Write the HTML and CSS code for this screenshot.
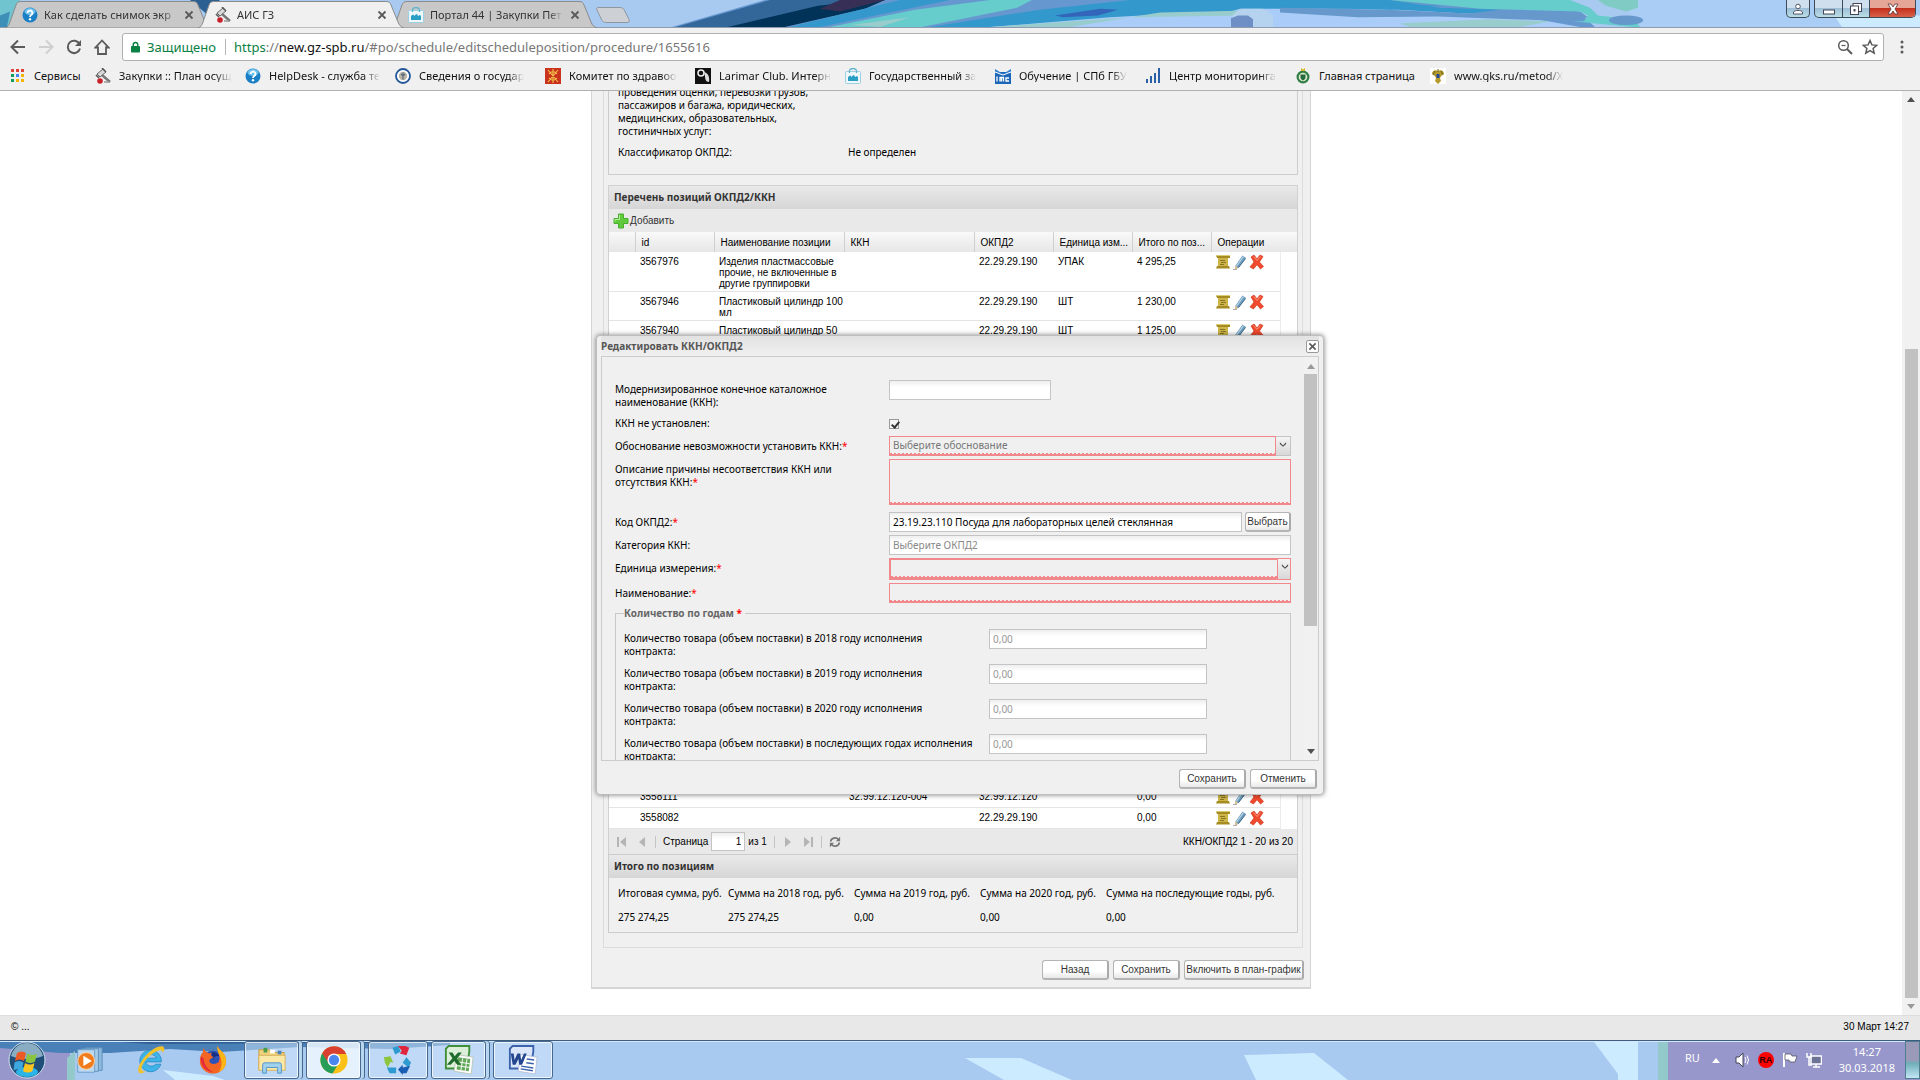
FILE: index.html
```html
<!DOCTYPE html>
<html lang="ru">
<head>
  <meta charset="UTF-8">
  <meta name="viewport" content="width=device-width, initial-scale=1.0">
  <title>АИС ГЗ</title>
  <link rel="stylesheet" href="styles.css">
</head>
<body>

<!-- Общие иконки -->
<svg class="defs" aria-hidden="true">
  <symbol id="i-x" viewBox="0 0 10 10"><path d="M1.5 1.5l7 7M8.5 1.5l-7 7" fill="none" stroke="#5a5a5a" stroke-width="1.8"/></symbol>
  <symbol id="i-gavel" viewBox="0 0 16 16">
    <path d="M2 6l6-5 3 3-6 5z" fill="#d8d8d8" stroke="#666" stroke-width="1"/>
    <path d="M1 7l3 3M7 0l4 4" stroke="#555" stroke-width="1.6"/>
    <path d="M7 7l8 7" stroke="#777" stroke-width="2.4"/>
    <circle cx="5" cy="13" r="2.8" fill="#c8202a"/><path d="M9 14h5" stroke="#999" stroke-width="1.5"/>
  </symbol>
  <symbol id="i-help" viewBox="0 0 16 16">
    <circle cx="8" cy="8" r="7.5" fill="#1a7fc4"/><ellipse cx="8" cy="4.5" rx="5.5" ry="3.5" fill="#6cc0ee"/>
    <path d="M5.6 6a2.4 2.4 0 1 1 3.6 2c-.9.6-1.2.9-1.2 2" fill="none" stroke="#fff" stroke-width="1.8"/><circle cx="8" cy="12.3" r="1.2" fill="#fff"/>
  </symbol>
  <symbol id="i-portal" viewBox="0 0 16 16">
    <rect x=".5" y="3.500" width="15" height="12" rx="1" fill="#eef8fb" stroke="#9ccfe0"/>
    <path d="M4.500 5V3a3.500 2.500 0 0 1 7 0v2" fill="none" stroke="#5fb4cc" stroke-width="1.3"/>
    <path d="M3 13V9l2-1.500L7 9V8l2-1 1 2 2-1 1 1v4z" fill="#2a9fc4"/>
  </symbol>
  <symbol id="i-scroll" viewBox="0 0 16 16">
    <path d="M3 3h10v10H3z" fill="#cdb548"/>
    <path d="M1 1.500h14v2.500H2zM2 12h12l1 2.500H1z" fill="#a58c22"/>
    <path d="M1.500 1.500h13" stroke="#e0cc70" stroke-width="1"/>
    <path d="M5 6.500h5M6 8.500h5M5 10.500h4" stroke="#8a7620" stroke-width="1"/>
  </symbol>
  <symbol id="i-pencil" viewBox="0 0 16 16">
    <path d="M10.500 1.500L14 4 6.500 14 3 15l.5-3.500z" fill="#6f9dbd"/>
    <path d="M11.500 2.500L4.500 12" stroke="#b9d8ea" stroke-width="1.2"/>
    <path d="M13.500 4.500L6.500 13.500" stroke="#3f6a8c" stroke-width="1"/>
    <path d="M3.600 11.500L2.500 15.500 6 14z" fill="#dfc38a"/><path d="M1 15.500h4" stroke="#999" stroke-width=".8"/>
  </symbol>
  <symbol id="i-delete" viewBox="0 0 16 16">
    <path d="M2 3l3-2 3 4L11 1l3 1.500L10.500 8 14.500 12.500 11.500 15 8 10.800 4.500 15 1 13l4-5z" fill="#ef4a2d" stroke="#c92c14" stroke-width=".6"/>
    <path d="M4.500 2.500L8 6.500l3.500-4" fill="none" stroke="#ff9277" stroke-width="1"/>
  </symbol>
  <symbol id="i-down" viewBox="0 0 15 18"><path d="M4 6l3.500 3.500L11 6v2l-3.500 3L4 8z" fill="#444"/></symbol>
  <symbol id="i-tri-up" viewBox="0 0 8 5"><path d="M0 5l4-5 4 5z" fill="currentColor"/></symbol>
  <symbol id="i-tri-down" viewBox="0 0 8 5"><path d="M0 0l4 5 4-5z" fill="currentColor"/></symbol>
  <symbol id="i-tab" viewBox="0 0 206 27">
    <path d="M0 27C3 26 4 24 5 21L11 4C12 1.500 13 .5 16 .5H188c3 0 4 1 5 3.500L200 21c1 3 3 5 6 6z" fill="currentColor" stroke="#8b8b8b"/>
  </symbol>
</svg>

<header class="browser">
  <div class="tabs">
    <svg class="wallpaper" viewBox="0 0 1920 28" preserveAspectRatio="none" aria-hidden="true">
      <rect width="1920" height="28" fill="#a8c9f0"/>
      <path d="M0 0h20L8 28H0z" fill="#6fc4d0"/><path d="M0 16l10-4-3 16H0z" fill="#3e8fb8"/>
      <path d="M190 0h30l-14 14z" fill="#2c5f92"/>
      <path d="M672 28L765 0h800l30 28z" fill="#6698cf"/>
      <path d="M676 28L770 0h115l-120 28z" fill="#336699"/>
      <path d="M728 28l90-22 55-6h12l-20 9-80 19z" fill="#013358"/>
      <path d="M820 9l20-9h45l-45 12z" fill="#372f55"/>
      <path d="M790 28L900 0h50l-130 28z" fill="#3498cc"/>
      <path d="M830 28l85-18L990 0h42l-15 8-95 20z" fill="#66cccc"/>
      <path d="M850 26l60-8-30 10z" fill="#99cccc"/>
      <path d="M930 28l110-18 90-10h260l50 8 60 2-40 5-190-6-150 9-80 10z" fill="#3398cc"/>
      <path d="M1055 16l45-7 18 1-20 6-35 2z" fill="#3366bb"/>
      <path d="M990 28l120-10 50-3h60l20-6h140l140 8 60 11z" fill="#a9cdf8"/>
      <path d="M990 28l140-10-60 10zM1130 18l110-2 10-5-90 2z" fill="#99cccc"/>
      <path d="M1230 28l3-13 8-6h22l10 6v13z" fill="#b5d2ee"/>
      <path d="M1231 28v-9l7-3h10l5 4v8z" fill="#6d8fc5"/>
      <path d="M1280 8l110 2 80 4 110-2 8 6-20 4-130-5-80 1-78-5z" fill="#6698cc"/>
      <path d="M1280 2h50l110 4-50 4-110-3z" fill="#3398cc"/>
      <path d="M1390 0h180l20 8 8 8 70 8 4 4h-40l-60-6h12l4-6-8-4-100-3z" fill="#66cccc"/>
      <path d="M1400 24l90-4 60 2-30 6h-110z" fill="#99cccc"/>
      <path d="M1580 0h40l20 28h280V0z" fill="#a9cdf5"/>
      <path d="M1598 0h40v8l-12 4-20-6z" fill="#80ccc4"/><ellipse cx="1626" cy="21" rx="17" ry="5" fill="#6698cc"/>
      <path d="M1834 16h86v12h-78z" fill="#cdebff"/>
    </svg>
    <div class="tab">
      <svg class="tab-shape"><use href="#i-tab"/></svg>
      <svg class="ico"><use href="#i-help"/></svg>
      <span class="tab-title">Как сделать снимок экр</span>
      <button class="tab-close" aria-label="Закрыть вкладку"><svg><use href="#i-x"/></svg></button>
    </div>
    <div class="tab active">
      <svg class="tab-shape"><use href="#i-tab"/></svg>
      <svg class="ico"><use href="#i-gavel"/></svg>
      <span class="tab-title">АИС ГЗ</span>
      <button class="tab-close" aria-label="Закрыть вкладку"><svg><use href="#i-x"/></svg></button>
    </div>
    <div class="tab">
      <svg class="tab-shape"><use href="#i-tab"/></svg>
      <svg class="ico"><use href="#i-portal"/></svg>
      <span class="tab-title">Портал 44 | Закупки Пет</span>
      <button class="tab-close" aria-label="Закрыть вкладку"><svg><use href="#i-x"/></svg></button>
    </div>
    <button class="new-tab" aria-label="Новая вкладка">
      <svg viewBox="0 0 34 16"><path d="M2 .5h22c2 0 3 1 4 2l5 10c1 2 0 3-2 3H10c-2 0-3-1-4-2L1 3C0 1 1 .5 2 .5z" fill="#cdd0d4" stroke="#8f979f"/></svg>
    </button>
    <div class="win-buttons">
      <button class="win-user" aria-label="Профиль"><svg viewBox="0 0 12 12"><circle cx="6" cy="3.500" r="2.300" fill="#fff" stroke="#556"/><path d="M1.500 11V9c1-2 8-2 9 0v2z" fill="#fff" stroke="#556"/></svg></button>
      <div class="win-group">
        <button aria-label="Свернуть"><svg viewBox="0 0 12 12"><rect x=".5" y="7" width="11" height="4" fill="#fff" stroke="#445"/></svg></button>
        <button aria-label="Восстановить"><svg viewBox="0 0 12 12"><rect x="3" y=".5" width="8.500" height="8" fill="#fff" stroke="#445"/><rect x=".5" y="3" width="8" height="8.500" fill="#fff" stroke="#445"/><rect x="3.500" y="6" width="2" height="2.500" fill="#445"/></svg></button>
        <button class="win-close" aria-label="Закрыть"><svg viewBox="0 0 12 12"><path d="M1 1h3l2 3 2-3h3L8 6l3 5H8L6 8l-2 3H1l3-5z" fill="#fff" stroke="#533" stroke-width=".8"/></svg></button>
      </div>
    </div>
  </div>

  <div class="toolbar">
    <button aria-label="Назад"><svg viewBox="0 0 16 16"><path d="M15 8H2M8 1.500L1.500 8 8 14.500" fill="none" stroke="#5a5a5a" stroke-width="2"/></svg></button>
    <button aria-label="Вперёд"><svg viewBox="0 0 16 16"><path d="M1 8h13M8 1.500L14.500 8 8 14.500" fill="none" stroke="#cfcfcf" stroke-width="2"/></svg></button>
    <button aria-label="Обновить"><svg viewBox="0 0 16 16"><path d="M13.500 5A6.200 6.200 0 1 0 14 9.500" fill="none" stroke="#5a5a5a" stroke-width="2"/><path d="M15 1v6H9z" fill="#5a5a5a"/></svg></button>
    <button aria-label="Домой"><svg viewBox="0 0 16 16"><path d="M8 1.500L1.500 8.500H4V15h8V8.500h2.500z" fill="none" stroke="#5a5a5a" stroke-width="1.8"/></svg></button>
    <div class="omnibox">
      <svg class="lock" viewBox="0 0 10 12"><rect y="5" width="10" height="7" rx="1" fill="#0b8043"/><path d="M2.500 6V3.500a2.500 2.500 0 0 1 5 0V6" fill="none" stroke="#0b8043" stroke-width="1.6"/></svg>
      <span class="secure">Защищено</span>
      <span class="url"><span class="green">https</span>://<b>new.gz-spb.ru</b>/#po/schedule/editscheduleposition/procedure/1655616</span>
      <button aria-label="Масштаб"><svg viewBox="0 0 16 16"><circle cx="6.500" cy="6.500" r="4.800" fill="none" stroke="#5a5a5a" stroke-width="1.500"/><path d="M10 10l5 5" stroke="#5a5a5a" stroke-width="2"/><path d="M4.500 6.500h4" stroke="#5a5a5a" stroke-width="1.200"/></svg></button>
      <button aria-label="В закладки"><svg viewBox="0 0 16 16"><path d="M8 1.500l1.900 4.400 4.800.4-3.600 3.200 1.100 4.700L8 11.700l-4.200 2.500 1.100-4.700L1.300 6.300l4.800-.4z" fill="none" stroke="#5a5a5a" stroke-width="1.500"/></svg></button>
    </div>
    <button class="menu" aria-label="Меню"><svg viewBox="0 0 16 16"><circle cx="8" cy="3" r="1.500" fill="#5a5a5a"/><circle cx="8" cy="8" r="1.500" fill="#5a5a5a"/><circle cx="8" cy="13" r="1.500" fill="#5a5a5a"/></svg></button>
  </div>

  <nav class="bookmarks">
    <a class="apps" href="#"><svg viewBox="0 0 13 13"><path d="M0 0h3v3H0zM5 0h3v3H5zM10 0h3v3h-3z" fill="#db4437"/><path d="M0 5h3v3H0z" fill="#0f9d58"/><path d="M5 5h3v3H5z" fill="#4285f4"/><path d="M10 5h3v3h-3z" fill="#f4b400"/><path d="M0 10h3v3H0z" fill="#0f9d58"/><path d="M5 10h3v3H5zM10 10h3v3h-3z" fill="#f4b400"/></svg><span>Сервисы</span></a>
    <a href="#"><svg class="ico"><use href="#i-gavel"/></svg><span>Закупки :: План осущ</span></a>
    <a href="#"><svg class="ico"><use href="#i-help"/></svg><span>HelpDesk - служба те</span></a>
    <a href="#"><svg class="ico" viewBox="0 0 16 16"><circle cx="8" cy="8" r="7" fill="#fff" stroke="#24569a" stroke-width="1.800"/><circle cx="8" cy="8" r="4.200" fill="#b9b4a4"/><path d="M8 4.500v7M6 6l2 2 2-2" stroke="#5b6a80" stroke-width="1.200" fill="none"/></svg><span>Сведения о государ</span></a>
    <a href="#"><svg class="ico" viewBox="0 0 16 16"><rect width="16" height="16" fill="#c9321c"/><path d="M3 2l10 12M13 2L3 14M8 1v14M4 6c2-3 6-3 8 0M4 10c2 3 6 3 8 0" fill="none" stroke="#f2c14b" stroke-width="1.100"/></svg><span>Комитет по здравоо</span></a>
    <a href="#"><svg class="ico" viewBox="0 0 16 16"><rect width="16" height="16" fill="#111"/><circle cx="6" cy="5" r="3" fill="none" stroke="#eee" stroke-width="1.500"/><path d="M9 4c4 1 6 5 5 10-3 0-4-3-4-6z" fill="#ddd"/></svg><span>Larimar Club. Интерн</span></a>
    <a href="#"><svg class="ico"><use href="#i-portal"/></svg><span>Государственный за</span></a>
    <a href="#"><svg class="ico" viewBox="0 0 16 16"><rect y="4" width="16" height="12" fill="#1c66b8"/><path d="M0 1l8 5 8-5v4H0z" fill="#2f7fd0"/><path d="M0 4l8 3 8-3" fill="none" stroke="#fff"/><path d="M2 8.500v5M5 13.500v-4h1.500v4M6.500 9.500H8.500v4M14 10h-3v3h3" fill="none" stroke="#fff" stroke-width="1.300"/></svg><span>Обучение | СПб ГБУ</span></a>
    <a href="#"><svg class="ico" viewBox="0 0 16 16"><path d="M1 11h2v4H1zM5 8h2v7H5zM9 5h2v10H9zM13 0h2v15h-2z" fill="#2b5fa8"/></svg><span>Центр мониторинга</span></a>
    <a class="short" href="#"><svg class="ico" viewBox="0 0 16 16"><circle cx="8" cy="9" r="6.500" fill="#2f7f45"/><circle cx="8" cy="9" r="4.300" fill="#dfe9d0"/><path d="M5.500 6.500h5v3c0 2-2.500 3-2.500 3s-2.500-1-2.500-3z" fill="#276b3a"/><path d="M6 0l2 1.500L10 0v3H6z" fill="#d8b62c"/></svg><span>Главная страница</span></a>
    <a href="#"><svg class="ico" viewBox="0 0 16 16"><rect width="16" height="16" fill="#fff"/><path d="M8 3C5 1 2 3 2 6c2 1 3 2 4 4l-1 3 3 3 3-3-1-3c1-2 2-3 4-4 0-3-3-5-6-3z" fill="#b39a2c"/><rect x="6.500" y="6" width="3" height="4" fill="#25469b"/><path d="M5 3l-2 4M11 3l2 4M8 1v3" stroke="#6d5f1c"/></svg><span>www.gks.ru/metod/X</span></a>
  </nav>
</header>

<main class="viewport">
  <div class="page">
    <section class="panel">
      <div class="panel-body">
        <div class="box classifier">
          <p>проведения оценки, перевозки грузов, пассажиров и багажа, юридических, медицинских, образовательных, гостиничных услуг:</p>
          <dl>
            <dt>Классификатор ОКПД2:</dt>
            <dd>Не определен</dd>
          </dl>
        </div>

        <div class="grid">
          <h2>Перечень позиций ОКПД2/ККН</h2>
          <div class="grid-toolbar">
            <button><svg class="ico" viewBox="0 0 16 16"><path d="M5.500 1h5v4.500H15v5h-4.500V15h-5v-4.500H1v-5h4.500z" fill="#5fcb3c" stroke="#4aaf2e"/><path d="M6.500 2v4.500H2v2" fill="none" stroke="#b4f09a"/></svg>Добавить</button>
          </div>
          <table class="positions">
            <colgroup>
              <col class="c-num"><col class="c-id"><col class="c-wide"><col class="c-wide"><col class="c-id"><col class="c-id"><col class="c-id"><col class="c-ops"><col>
            </colgroup>
            <thead>
              <tr><th></th><th>id</th><th>Наименование позиции</th><th>ККН</th><th>ОКПД2</th><th>Единица изм...</th><th>Итого по поз...</th><th colspan="2">Операции</th></tr>
            </thead>
            <tbody>
              <tr><td></td><td>3567976</td><td>Изделия пластмассовые прочие, не включенные в другие группировки</td><td></td><td>22.29.29.190</td><td>УПАК</td><td>4 295,25</td><td class="ops"><svg><use href="#i-scroll"/></svg><svg><use href="#i-pencil"/></svg><svg><use href="#i-delete"/></svg></td><td class="rest"></td></tr>
              <tr><td></td><td>3567946</td><td>Пластиковый цилиндр 100 мл</td><td></td><td>22.29.29.190</td><td>ШТ</td><td>1 230,00</td><td class="ops"><svg><use href="#i-scroll"/></svg><svg><use href="#i-pencil"/></svg><svg><use href="#i-delete"/></svg></td><td class="rest"></td></tr>
              <tr><td></td><td>3567940</td><td>Пластиковый цилиндр 50</td><td></td><td>22.29.29.190</td><td>ШТ</td><td>1 125,00</td><td class="ops"><svg><use href="#i-scroll"/></svg><svg><use href="#i-pencil"/></svg><svg><use href="#i-delete"/></svg></td><td class="rest"></td></tr>
              <tr class="more"><td colspan="9"></td></tr>
              <tr><td></td><td>3558111</td><td></td><td>32.99.12.120-004</td><td>32.99.12.120</td><td></td><td>0,00</td><td class="ops"><svg><use href="#i-scroll"/></svg><svg><use href="#i-pencil"/></svg><svg><use href="#i-delete"/></svg></td><td class="rest"></td></tr>
              <tr><td></td><td>3558082</td><td></td><td></td><td>22.29.29.190</td><td></td><td>0,00</td><td class="ops"><svg><use href="#i-scroll"/></svg><svg><use href="#i-pencil"/></svg><svg><use href="#i-delete"/></svg></td><td class="rest"></td></tr>
            </tbody>
          </table>
          <div class="pager">
            <button aria-label="Первая"><svg viewBox="0 0 12 12"><path d="M1 1h2v10H1zM10 1v10L4 6z" fill="#b5b5b5"/></svg></button>
            <button aria-label="Предыдущая"><svg viewBox="0 0 12 12"><path d="M9 1v10L3 6z" fill="#b5b5b5"/></svg></button>
            <i></i>
            <label for="pageNum">Страница</label>
            <input type="text" id="pageNum" value="1">
            <span>из 1</span>
            <i></i>
            <button aria-label="Следующая"><svg viewBox="0 0 12 12"><path d="M3 1v10l6-5z" fill="#b5b5b5"/></svg></button>
            <button aria-label="Последняя"><svg viewBox="0 0 12 12"><path d="M9 1h2v10H9zM2 1v10l6-5z" fill="#b5b5b5"/></svg></button>
            <i></i>
            <button aria-label="Обновить"><svg viewBox="0 0 14 14"><path d="M2 6.500A5 4.500 0 0 1 11 4M12 7.500A5 4.500 0 0 1 3 10" fill="none" stroke="#777" stroke-width="2"/><path d="M13 1v5H8zM1 13V8h5z" fill="#777"/></svg></button>
            <span class="total">ККН/ОКПД2 1 - 20 из 20</span>
          </div>
        </div>

        <div class="box summary">
          <h2>Итого по позициям</h2>
          <table>
            <tr><th class="sum-total">Итоговая сумма, руб.</th><th class="sum-year">Сумма на 2018 год, руб.</th><th class="sum-year">Сумма на 2019 год, руб.</th><th class="sum-year">Сумма на 2020 год, руб.</th><th>Сумма на последующие годы, руб.</th></tr>
            <tr><td>275 274,25</td><td>275 274,25</td><td>0,00</td><td>0,00</td><td>0,00</td></tr>
          </table>
        </div>
      </div>
      <div class="buttons">
        <button class="btn">Назад</button>
        <button class="btn">Сохранить</button>
        <button class="btn wide">Включить в план-график</button>
      </div>
    </section>
  </div>
  <div class="scrollbar page-scroll"><svg><use href="#i-tri-up"/></svg><div></div><svg><use href="#i-tri-down"/></svg></div>

  <!-- Окно редактирования -->
  <div class="dialog" role="dialog" aria-labelledby="dialogTitle">
    <div class="dialog-head">
      <h2 id="dialogTitle">Редактировать ККН/ОКПД2</h2>
      <button aria-label="Закрыть"><svg><use href="#i-x"/></svg></button>
    </div>
    <div class="dialog-body">
      <form>
        <div class="row tall">
          <label for="kkn">Модернизированное конечное каталожное наименование (ККН):</label>
          <input class="short" type="text" id="kkn">
        </div>
        <div class="row">
          <label for="noKkn">ККН не установлен:</label>
          <input type="checkbox" id="noKkn" checked>
        </div>
        <div class="row">
          <label for="reason">Обоснование невозможности установить ККН:<em>*</em></label>
          <div class="combo">
            <select class="invalid" id="reason"><option>Выберите обоснование</option></select>
            <span class="trigger"><svg><use href="#i-down"/></svg></span>
          </div>
        </div>
        <div class="row area">
          <label for="descr">Описание причины несоответствия ККН или отсутствия ККН:<em>*</em></label>
          <textarea class="invalid" id="descr"></textarea>
        </div>
        <div class="row">
          <label for="okpd">Код ОКПД2:<em>*</em></label>
          <input type="text" id="okpd" value="23.19.23.110 Посуда для лабораторных целей стеклянная">
          <button type="button" class="btn pick">Выбрать</button>
        </div>
        <div class="row">
          <label for="category">Категория ККН:</label>
          <input type="text" id="category" placeholder="Выберите ОКПД2">
        </div>
        <div class="row">
          <label for="unit">Единица измерения:<em>*</em></label>
          <div class="combo focus">
            <select class="invalid" id="unit"><option></option></select>
            <span class="trigger"><svg><use href="#i-down"/></svg></span>
          </div>
        </div>
        <div class="row">
          <label for="name">Наименование:<em>*</em></label>
          <input class="invalid" type="text" id="name">
        </div>
        <fieldset>
          <legend>Количество по годам <em>*</em></legend>
          <div class="year"><label for="q1">Количество товара (объем поставки) в 2018 году исполнения<br>контракта:</label><input type="text" id="q1" value="0,00" disabled></div>
          <div class="year"><label for="q2">Количество товара (объем поставки) в 2019 году исполнения<br>контракта:</label><input type="text" id="q2" value="0,00" disabled></div>
          <div class="year"><label for="q3">Количество товара (объем поставки) в 2020 году исполнения<br>контракта:</label><input type="text" id="q3" value="0,00" disabled></div>
          <div class="year"><label for="q4">Количество товара (объем поставки) в последующих годах исполнения<br>контракта:</label><input type="text" id="q4" value="0,00" disabled></div>
        </fieldset>
      </form>
      <div class="scrollbar dialog-scroll"><svg><use href="#i-tri-up"/></svg><div></div><svg><use href="#i-tri-down"/></svg></div>
    </div>
    <div class="dialog-foot">
      <button class="btn">Сохранить</button>
      <button class="btn">Отменить</button>
    </div>
  </div>
</main>

<footer class="status"><span>© ...</span><span>30 Март 14:27</span></footer>

<!-- Панель задач -->
<div class="taskbar">
  <svg class="wallpaper" viewBox="0 0 1920 40" preserveAspectRatio="none" aria-hidden="true">
    <rect width="1920" height="40" fill="#a8c9f0"/>
    <path d="M0 0h70v40H0z" fill="#9797cb"/>
    <path d="M0 0h450v5l-60 4-90-2-80 5-50-3-60 4H60L0 8z" fill="#4a80b8"/>
    <path d="M90 0h340l-60 3-220 1z" fill="#2f5f94"/>
    <path d="M67 18l8-7v29h-8z" fill="#94c9cc"/>
    <path d="M163 30l50 6 12 4h-50z" fill="#cdebff"/>
    <path d="M965 18h56l51 22h-68z" fill="#cdebff"/>
    <path d="M1244 15l70-2 34 27h-92z" fill="#cdebff"/>
    <path d="M1594 2h44v38h-20v-6z" fill="#cdebff"/>
    <path d="M1658 0h20v40h-20z" fill="#94c9cc"/>
    <path d="M1668 0h252v40h-252z" fill="#9797cb"/>
    <path d="M0 .5h1920" stroke="#3c5c80"/><path d="M0 1.500h1920" stroke="#d6e8fb"/>
  </svg>
  <div class="tasks">
    <button class="start" aria-label="Пуск"><svg viewBox="0 0 38 38"><circle cx="19" cy="19" r="18" fill="#1f4f78" stroke="#d3e2ee" stroke-width="1"/><path d="M3 15C6 5 13 2 19 2s13 3 16 13c-9 4-23 4-32 0z" fill="#8badc4"/><ellipse cx="19" cy="31" rx="11" ry="5" fill="#2ab4e8"/><path d="M9 12c3-2 6-2 9 0l-2 8c-3-2-6-2-9 0z" fill="#ee5a24"/><path d="M19.500 12.500c3 2 6 2 9.500 0l-2 8c-3 2-6 2-9.500 0z" fill="#8bc540"/><path d="M6.500 21.500c3-2 6-2 9 0l-2 8c-2-2-5-2-8 0z" fill="#3ea7e0"/><path d="M17 22c3 2 6 2 9.500 0l-2 8c-3 2-6 2-9.500 0z" fill="#fbc41f"/></svg></button>
    <button class="pin" aria-label="Проигрыватель"><svg viewBox="0 0 32 32"><path d="M12 3h18v24H12z" fill="#8fb9dc" stroke="#5c8fbd"/><path d="M8 4h18v24H8z" fill="#a8cbe8" stroke="#5c8fbd"/><path d="M4 5h18v24H4z" fill="#bcd9f0" stroke="#6a9cc6"/><circle cx="13" cy="17" r="9" fill="#f07c1e" stroke="#fbd6ad"/><path d="M10 11.500l9 5.500-9 5.500z" fill="#fff"/></svg></button>
    <button class="pin" aria-label="Internet Explorer"><svg viewBox="0 0 32 32"><path d="M27 18H10.500c.5 4 7 6.500 10.500 2.500h5.500A11.500 11.500 0 1 1 27 18zM10.500 14h11c-1-5-10-5-11 0z" fill="#3fb4e8" stroke="#1b7fb8" stroke-width=".7"/><path d="M4 30C-1 27 6 14 16 6c7-5 13-6 14-3 .5 2-.5 4-1.500 6 0-3-1-5-7-2C12 12 5 22 6 26c.3 2 2 2 4 2-2 2-4 2.500-6 2z" fill="#f2c22c"/></svg></button>
    <button class="pin" aria-label="Firefox"><svg viewBox="0 0 32 32"><circle cx="16" cy="18" r="12" fill="#2a52b8"/><path d="M14 8c4-1 8 1 9 4-4-1-7 1-7 4z" fill="#1a2f80"/><path d="M21 1c1 5 9 7 9 16a14 13.500 0 0 1-28 0c0-5 2-8 3-9l1-5c1 3 3 5 6 6l3-1c-2 3-1 4 2 5-2 1-4 1-5 4 1 4 7 4 10 1 3-5-2-12-1-17z" fill="#f26522"/><path d="M21 1c1 5 9 7 9 16a14 13.500 0 0 1-8 12c4-6 4-12 1-18-2-4-3-7-2-10z" fill="#fbb615"/><path d="M3 12c-1 9 5 17 14 17-5-2-11-7-11-15z" fill="#e5293e"/></svg></button>
    <button class="task stacked" aria-label="Проводник"><svg viewBox="0 0 32 32"><path d="M2 5h11l2 3h14v18H2z" fill="#f0d27c" stroke="#c79d3e"/><path d="M7 3h4v5H7z" fill="#4a9b4a"/><path d="M14 5h5v4h-5z" fill="#fff"/><path d="M22 6h4v4h-4z" fill="#4a7fc0"/><path d="M2 11h28v16H2z" fill="#fbe8a6" stroke="#d6b25a"/><path d="M6 30v-9q0-2 2-2h16q2 0 2 2v9h-4v-6H10v6z" fill="#9fd0ee" stroke="#4f94c4"/></svg></button>
    <button class="task stacked current" aria-label="Chrome"><svg viewBox="0 0 32 32"><circle cx="16" cy="16" r="14.500" fill="#fbc116"/><path d="M16 16h-6.500L3.400 8.700a14.500 14.500 0 0 0 11 21.700L21.500 19z" fill="#279e57"/><path d="M3.400 8.700L10 19l6-3V9.500h13A14.500 14.500 0 0 0 3.400 8.700z" fill="#d9402f"/><circle cx="16" cy="16" r="7" fill="#fff"/><circle cx="16" cy="16" r="5.500" fill="#4a86ee"/></svg></button>
    <button class="task" aria-label="Утилита"><svg viewBox="0 0 32 32"><path d="M10 3l6-2 3 6-6 3z" fill="#2f9ad0"/><path d="M16 1h8l4 2-3 8-7-2 2-3z" fill="#e0243c"/><path d="M25 13l5 6-3 5-6-5z" fill="#2f9ad0"/><path d="M29 22l-4 8h-4v2l-5-6 5-5v3z" fill="#1a5fb4"/><path d="M14 24v6H7l-3-6z" fill="#2f9ad0"/><path d="M1 13l7-1 3 7-3-1-3 6-3-5z" fill="#8cc63e"/></svg></button>
    <button class="task stacked" aria-label="Excel"><svg viewBox="0 0 32 32"><path d="M5 1h22v6L24 25H2V4z" fill="#dcefd8" stroke="#3f8f3a" stroke-width="2"/><path d="M13 10l18 3-2 18-18-3z" fill="#fff" stroke="#b9c9b5"/><path d="M15 13l13 2-1.600 13-13-2z" fill="#63a95a"/><path d="M14.500 18l13 2M14 22l13 2M20 14l-2 13M24.500 15l-2 13" stroke="#fff"/><path d="M5 8h4l2.500 4L15 8h4l-5 6.500 4 6.500h-4l-3-4-4 4H3l6-7z" fill="#1f6b2b"/></svg></button>
    <button class="task" aria-label="Word"><svg viewBox="0 0 32 32"><path d="M5 1h22v6L24 25H2V4z" fill="#dbe6f8" stroke="#3c62ac" stroke-width="2"/><path d="M13 10l18 3-2 18-18-3z" fill="#fff" stroke="#b6c2da"/><path d="M20 15l8 1M19.500 19l8 1M14 22.500l13 2M13.500 25.500l13 2" stroke="#3c62ac" stroke-width="1.500"/><path d="M3 9h3l1 7 3-7h3l1 7 3-7h3l-5 12h-3l-1-6-3 6H5z" fill="#23468f"/></svg></button>
  </div>
  <div class="tray">
    <span class="lang">RU</span>
    <svg class="up"><use href="#i-tri-up"/></svg>
    <svg class="ico" viewBox="0 0 16 16"><path d="M2 5h3l4-4v14l-4-4H2z" fill="#fff" stroke="#445"/><path d="M11 5q2 3 0 6M13 3.500q3 4.500 0 9" fill="none" stroke="#fff"/></svg>
    <span class="ra">RA</span>
    <svg class="ico" viewBox="0 0 16 16"><path d="M2 1v14" stroke="#fff" stroke-width="2"/><path d="M3 2h6l1 2h5l-2 6H8L7 8H3z" fill="#fff" stroke="#556" stroke-width=".8"/></svg>
    <svg class="ico" viewBox="0 0 16 16"><rect x="5" y="4" width="10.500" height="8" fill="#6c7396" stroke="#fff" stroke-width="1.500"/><path d="M7 15h7M10 12v3M1 1v4h4V1M3 5v8h3" stroke="#fff" stroke-width="1.500" fill="none"/></svg>
    <div class="clock"><span>14:27</span><span>30.03.2018</span></div>
    <button class="desk" aria-label="Свернуть все окна"></button>
  </div>
</div>

</body>
</html>
```
FILE: styles.css
```css
* {
  box-sizing: border-box;
}
body {
  margin: 0;
  height: 100vh;
  display: flex;
  flex-direction: column;
  overflow: hidden;
  background: #fff;
  font: 10px/13px "Noto Sans", "Open Sans", sans-serif;
  color: #000;
}
button, input, select, textarea {
  font: inherit;
  color: inherit;
  margin: 0;
  padding: 0;
}
button {
  border: 0;
  background: none;
}
svg {
  display: block;
  flex: none;
}
h2 {
  margin: 0;
  font-size: 10px;
  font-weight: bold;
  color: #333;
}
em {
  color: #f00;
  font-style: normal;
}
.defs {
  position: absolute;
  width: 0;
  height: 0;
}
.ico {
  width: 16px;
  height: 16px;
}

/* Браузер */
.browser {
  background: #f0f0f0;
  border-bottom: 1px solid #b0b0b0;
}
.tabs {
  position: relative;
  display: flex;
  height: 28px;
  padding-left: 5px;
  border-bottom: 1px solid #8d9cb0;
  font-size: 11px;
}
.wallpaper {
  position: absolute;
  left: 0;
  top: 0;
  width: 100%;
  height: 100%;
}
.tab {
  position: relative;
  display: flex;
  align-items: center;
  width: 206px;
  height: 27px;
  margin: 1px -13px 0 0;
  padding: 0 17px;
  color: #c8c8c8;
}
.tab.active {
  color: #f0f0f0;
  z-index: 1;
}
.tab-shape {
  position: absolute;
  left: 0;
  top: 0;
  width: 206px;
  height: 27px;
}
.tab .ico, .tab-title, .tab-close {
  position: relative;
}
.tab-title {
  flex: 1;
  margin: 0 6px;
  color: #333;
  white-space: nowrap;
  mask-image: linear-gradient(to right, #000 88%, transparent);
}
.tab-close svg {
  width: 10px;
  height: 10px;
}
.new-tab {
  position: relative;
  margin: 3px 0 0 12px;
}
.new-tab svg {
  width: 34px;
  height: 16px;
}
.win-buttons {
  position: relative;
  display: flex;
  gap: 4px;
  height: 18px;
  margin: 0 4px 0 auto;
}
.win-buttons button {
  display: flex;
  justify-content: center;
  align-items: center;
  width: 27px;
}
.win-buttons svg {
  width: 12px;
  height: 12px;
}
.win-buttons .win-user, .win-group {
  border: 1px solid #3f4a58;
  border-top: 0;
  border-radius: 0 0 5px 5px;
  background: linear-gradient(#cfdfee 45%, #9fbfd8 50%, #b9dfe6);
  overflow: hidden;
}
.win-buttons .win-user {
  width: 24px;
}
.win-group {
  display: flex;
}
.win-group button + button {
  border-left: 1px solid #3f4a58;
}
.win-group .win-close {
  width: 46px;
  background: linear-gradient(#e6a697 45%, #c4301c 50%, #d9614a);
}
.toolbar {
  display: flex;
  align-items: center;
  gap: 12px;
  padding: 5px 0 0 10px;
}
.toolbar svg {
  width: 16px;
  height: 16px;
}
.omnibox {
  flex: 1;
  display: flex;
  align-items: center;
  height: 28px;
  padding: 0 5px 0 8px;
  background: #fff;
  border: 1px solid #b0b0b0;
  border-radius: 3px;
  font-size: 13px;
}
.toolbar .lock {
  width: 9px;
  height: 12px;
}
.secure {
  margin: 0 8px 0 7px;
  padding-right: 9px;
  color: #0b8043;
  border-right: 1px solid #b5b5b5;
  line-height: 16px;
}
.url {
  flex: 1;
  color: #777;
}
.url b {
  font-weight: normal;
  color: #111;
}
.green {
  color: #0b8043;
}
.omnibox button + button {
  margin-left: 9px;
}
.menu {
  margin: 0 10px 0 -2px;
}
.bookmarks {
  display: flex;
  align-items: center;
  height: 29px;
  padding-left: 11px;
  font-size: 11px;
}
.bookmarks a {
  display: flex;
  align-items: center;
  gap: 8px;
  width: 150px;
  color: #111;
  text-decoration: none;
}
.bookmarks span {
  white-space: nowrap;
  mask-image: linear-gradient(to right, #000 85%, transparent);
}
.bookmarks .apps {
  gap: 10px;
  width: 84px;
}
.bookmarks .apps svg {
  width: 13px;
  height: 13px;
}
.bookmarks .short {
  width: 135px;
}
.bookmarks .apps span, .bookmarks .short span {
  mask-image: none;
}

/* Страница */
.viewport {
  position: relative;
  flex: 1;
  min-height: 0;
  display: flex;
}
.page {
  flex: 1;
  overflow: hidden;
}
.panel {
  max-width: 720px;
  margin: -6px auto 0;
  background: #f0f0f0;
  border: 1px solid #d5d5d5;
  border-bottom-width: 2px;
  padding: 0 6px 7px 11px;
}
.panel-body {
  margin-right: 1px;
  padding: 0 4px 14px;
  border: 1px solid #dcdcdc;
  border-top: 0;
}
.box {
  border: 1px solid #ccc;
}
.classifier {
  padding: 0 9px 15px;
  border-top: 0;
  margin-bottom: 10px;
}
.classifier p {
  max-width: 205px;
  margin: 0 0 8px;
}
.classifier dl {
  display: flex;
  margin: 0;
}
.classifier dt {
  width: 230px;
}
.classifier dd {
  margin: 0;
}
.grid {
  border: 1px solid #d0d0d0;
  border-bottom: 0;
}
.grid h2, .summary h2 {
  height: 23px;
  padding: 0 5px;
  line-height: 22px;
  background: linear-gradient(#e9e9e9, #d6d6d6);
}
.grid-toolbar {
  display: flex;
  align-items: center;
  height: 23px;
  padding-left: 4px;
  background: #e9e9e9;
  font-family: "Liberation Sans", sans-serif;
}
.grid-toolbar button {
  display: flex;
  align-items: center;
  gap: 1px;
  color: #333;
}
.positions {
  width: 100%;
  table-layout: fixed;
  border-collapse: collapse;
  background: #fff;
  font: 10px/11px "Liberation Sans", sans-serif;
}
.c-num {
  width: 26px;
}
.c-id {
  width: 79px;
}
.c-wide {
  width: 130px;
}
.c-ops {
  width: 69px;
}
.positions th {
  height: 20px;
  padding: 0 0 0 6px;
  border-left: 1px solid #d0d0d0;
  background: linear-gradient(#f9f9f9, #e6e6e6);
  font-weight: normal;
  text-align: left;
  white-space: nowrap;
}
.positions th:first-child {
  border-left: 0;
}
.positions td {
  padding: 4px 0 2px 5px;
  border-bottom: 1px solid #e4e4e4;
  vertical-align: top;
}
.positions .rest {
  border-bottom: 0;
  border-left: 1px solid #ececec;
}
.positions .more td {
  height: 445px;
  padding: 0;
}
.positions .ops {
  padding: 2px 0 2px 4px;
}
.ops svg {
  display: inline-block;
  vertical-align: top;
  width: 16px;
  height: 16px;
  margin-right: 1px;
}
.pager {
  display: flex;
  align-items: center;
  gap: 8px;
  height: 25px;
  padding: 0 4px 0 7px;
  background: #e9e9e9;
  font-family: "Liberation Sans", sans-serif;
}
.pager svg {
  width: 12px;
  height: 12px;
}
.pager i {
  height: 12px;
  margin: 0 -1px;
  border-left: 1px solid #c4c4c4;
}
.pager label, .pager input {
  margin-right: -5px;
}
.pager input {
  width: 34px;
  height: 19px;
  padding-right: 3px;
  border: 1px solid #c0c0c0;
  text-align: right;
}
.total {
  margin-left: auto;
}
.summary table {
  width: 100%;
  table-layout: fixed;
  padding: 9px 0 0 7px;
  border-spacing: 0;
}
.sum-total {
  width: 110px;
}
.sum-year {
  width: 126px;
}
.summary th, .summary td {
  padding: 0 0 11px 2px;
  font-weight: normal;
  text-align: left;
  white-space: nowrap;
}
.summary td {
  padding-bottom: 8px;
}
.buttons {
  display: flex;
  justify-content: flex-end;
  gap: 4px;
  margin-top: 12px;
}
.btn {
  min-width: 67px;
  height: 20px;
  border: 1px solid #b4b4b4;
  border-right: 2px solid #aaa;
  border-bottom: 2px solid #b4b4b4;
  border-radius: 3px;
  background: linear-gradient(#fff 60%, #e8e8e8);
  color: #333;
  font-family: "Liberation Sans", sans-serif;
}
.btn.wide {
  min-width: 120px;
}

.scrollbar {
  display: flex;
  flex-direction: column;
  align-items: center;
  background: #f1f1f1;
}
.scrollbar svg {
  width: 8px;
  height: 5px;
  color: #505050;
}
.scrollbar div {
  background: #c1c1c1;
}
.page-scroll {
  width: 18px;
  padding: 6px 0;
}
.page-scroll div {
  flex: 1;
  width: 13px;
  margin: 247px 0 6px;
}
.page-scroll svg:last-child {
  color: #999;
}

/* Окно */
.dialog {
  position: absolute;
  left: 0;
  right: 0;
  top: 244px;
  max-width: 728px;
  margin: 0 auto;
  padding: 0 4px;
  background: #f0f0f0;
  border: 1px solid #bdbdbd;
  border-radius: 4px;
  box-shadow: 0 0 5px rgba(0, 0, 0, 0.5);
}
.dialog-head {
  display: flex;
  justify-content: space-between;
  align-items: center;
  height: 20px;
  background: linear-gradient(#e2e2e2, #f0f0f0);
}
.dialog-head h2 {
  color: #555;
}
.dialog-head button {
  width: 13px;
  height: 13px;
  padding: 1px;
  border: 1px solid #999;
  border-radius: 2px;
  background: #fff;
}
.dialog-head svg {
  width: 9px;
  height: 9px;
}
.dialog-body {
  display: flex;
  height: 405px;
  border: 1px solid #ccc;
  overflow: hidden;
}
.dialog-body form {
  flex: 1;
  padding: 23px 13px 0;
}
.row, .year {
  display: flex;
}
.row {
  min-height: 20px;
  margin-bottom: 3px;
}
.row label {
  width: 274px;
  padding: 4px 40px 0 0;
}
.row.tall {
  height: 30px;
}
.row.tall label {
  padding-top: 3px;
}
.row.area {
  margin-bottom: 7px;
}
.row input[type="text"], .combo {
  flex: 1;
  height: 20px;
}
.row input.short {
  flex: none;
  width: 162px;
}
input[type="text"], textarea, select {
  min-width: 0;
  padding: 0 3px;
  border: 1px solid #c4c4c4;
  border-radius: 0;
  background: linear-gradient(#eee, #fff 6px);
}
input[type="checkbox"] {
  width: 10px;
  height: 10px;
  margin: 6px 0 0;
  appearance: none;
  border: 1px solid #999;
  background: #f4f4f4;
}
input[type="checkbox"]:checked::before {
  content: "";
  display: block;
  width: 3px;
  height: 6px;
  margin: 0 0 0 3px;
  border: solid #333;
  border-width: 0 2px 2px 0;
  transform: rotate(40deg);
}
input::placeholder {
  color: #888;
}
.row textarea {
  flex: 1;
  height: 46px;
  resize: none;
}
.row .invalid, .row input.invalid {
  border: 1px solid #f0888c;
  border-bottom-width: 2px;
  background: repeating-linear-gradient(to right, #f0888c 0 2px, #f0f0f0 2px 4px) bottom / 100% 1px no-repeat #f0f0f0;
}
.combo {
  display: flex;
}
.combo select {
  flex: 1;
  appearance: none;
  color: #777;
}
.trigger {
  width: 15px;
  border: 1px solid #c4c4c4;
  border-left: 0;
  background: linear-gradient(#f4f4f4, #d8d8d8);
}
.trigger svg {
  width: 14px;
  height: 16px;
}
.row .combo.focus {
  height: 22px;
}
.row .combo.focus select {
  border-width: 2px 1px 3px 2px;
}
.combo.focus .trigger {
  width: 13px;
  border-color: #f0888c;
}
.btn.pick {
  min-width: 46px;
  margin-left: 3px;
}
fieldset {
  min-width: 0;
  margin: 4px 0 0;
  padding: 9px 8px 60px;
  border: 1px solid #c8c8c8;
}
legend {
  padding: 0 3px 0 0;
  color: #666;
  font-weight: bold;
}
.year {
  gap: 6px;
  margin-bottom: 6px;
}
.year label {
  width: 359px;
  padding-top: 3px;
}
.year input {
  width: 218px;
  height: 20px;
}
.year input:disabled {
  color: #999;
}
.dialog-scroll {
  width: 13px;
  margin-right: 1px;
  padding: 7px 0 6px;
}
.dialog-scroll div {
  width: 13px;
  height: 252px;
  margin: 5px 0 auto;
}
.dialog-scroll svg:first-child {
  color: #999;
}
.dialog-foot {
  display: flex;
  justify-content: flex-end;
  gap: 4px;
  height: 33px;
  padding: 8px 2px 0;
}

.status {
  display: flex;
  justify-content: space-between;
  height: 25px;
  padding: 4px 11px 0;
  background: #e8e8e8;
  border-top: 1px solid #ddd;
  font-family: "Liberation Sans", sans-serif;
}

/* Панель задач */
.taskbar {
  position: relative;
  display: flex;
  justify-content: space-between;
  height: 40px;
}
.tasks, .tray {
  position: relative;
  display: flex;
  align-items: center;
}
.tasks {
  padding: 1px 0 1px 8px;
}
.tasks svg {
  width: 30px;
  height: 32px;
}
.tasks .start svg {
  width: 38px;
  height: 38px;
}
.start {
  margin-right: 12px;
}
.pin {
  width: 62px;
  padding: 0 16px;
}
.task {
  display: flex;
  justify-content: center;
  align-items: center;
  width: 60px;
  height: 38px;
  margin-right: 3px;
  border: 1px solid #46688c;
  border-radius: 3px;
  background: rgba(214, 234, 252, 0.5);
  box-shadow: inset 0 0 0 1px rgba(255, 255, 255, 0.7);
}
.task.stacked {
  width: 55px;
  margin-right: 7px;
  box-shadow: inset 0 0 0 1px rgba(255, 255, 255, 0.7), 3px 0 0 #b9d6f0, 4px 0 0 #46688c;
}
.task.current {
  background: rgba(240, 248, 255, 0.85);
}
.tray {
  gap: 8px;
  color: #fff;
}
.lang {
  margin-right: 4px;
  padding-bottom: 5px;
  font-size: 11px;
}
.tray .up {
  width: 8px;
  height: 5px;
  margin-right: 6px;
}
.ra {
  width: 16px;
  height: 16px;
  border-radius: 50%;
  background: #f00;
  color: #300;
  font: bold 9px/16px "Liberation Sans", sans-serif;
  text-align: center;
}
.clock {
  display: flex;
  flex-direction: column;
  margin: 0 0 0 7px;
  padding: 0 2px;
  font-size: 11px;
  line-height: 16px;
  text-align: center;
}
.desk {
  width: 15px;
  height: 38px;
  border: 1px solid #4f7f8f;
  background: linear-gradient(#9a9ab8 50%, #6fb0b8 60%, #c4e6f6);
}
```
